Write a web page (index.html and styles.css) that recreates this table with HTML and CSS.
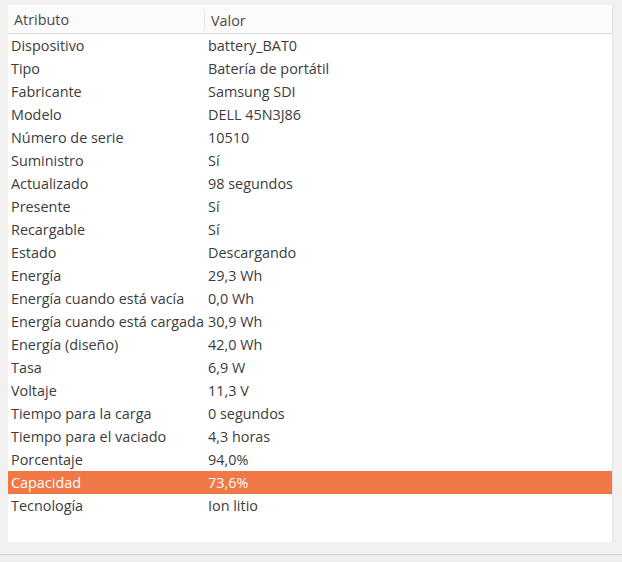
FILE: index.html
```html
<!DOCTYPE html>
<html lang="es">
<head>
<meta charset="utf-8">
<title>Batería</title>
<link rel="stylesheet" href="styles.css">
</head>
<body>
<div class="window">
  <div class="panel">
    <div class="head">
      <div class="hcell">Atributo</div>
      <div class="hcell hval">Valor</div>
    </div>
    <div class="rows">
      <div class="row"><span class="k">Dispositivo</span><span class="v">battery_BAT0</span></div>
      <div class="row"><span class="k">Tipo</span><span class="v">Batería de portátil</span></div>
      <div class="row"><span class="k">Fabricante</span><span class="v">Samsung SDI</span></div>
      <div class="row"><span class="k">Modelo</span><span class="v">DELL 45N3J86</span></div>
      <div class="row"><span class="k">Número de serie</span><span class="v">10510</span></div>
      <div class="row"><span class="k">Suministro</span><span class="v">Sí</span></div>
      <div class="row"><span class="k">Actualizado</span><span class="v">98 segundos</span></div>
      <div class="row"><span class="k">Presente</span><span class="v">Sí</span></div>
      <div class="row"><span class="k">Recargable</span><span class="v">Sí</span></div>
      <div class="row"><span class="k">Estado</span><span class="v">Descargando</span></div>
      <div class="row"><span class="k">Energía</span><span class="v">29,3 Wh</span></div>
      <div class="row"><span class="k">Energía cuando está vacía</span><span class="v">0,0 Wh</span></div>
      <div class="row"><span class="k">Energía cuando está cargada</span><span class="v">30,9 Wh</span></div>
      <div class="row"><span class="k">Energía (diseño)</span><span class="v">42,0 Wh</span></div>
      <div class="row"><span class="k">Tasa</span><span class="v">6,9 W</span></div>
      <div class="row"><span class="k">Voltaje</span><span class="v">11,3 V</span></div>
      <div class="row"><span class="k">Tiempo para la carga</span><span class="v">0 segundos</span></div>
      <div class="row"><span class="k">Tiempo para el vaciado</span><span class="v">4,3 horas</span></div>
      <div class="row"><span class="k">Porcentaje</span><span class="v">94,0%</span></div>
      <div class="row selected"><span class="k">Capacidad</span><span class="v">73,6%</span></div>
      <div class="row"><span class="k">Tecnología</span><span class="v">Ion litio</span></div>
    </div>
  </div>
  <div class="footer"></div>
</div>
</body>
</html>
```
FILE: styles.css
```css
html, body {
  margin: 0;
  padding: 0;
}
body {
  width: 622px;
  height: 562px;
  overflow: hidden;
  background: #f2f1f0;
  font-family: "Open Sans", "DejaVu Sans", sans-serif;
  font-size: 14.4px;
  color: #3c3c3c;
}
.window {
  padding: 5px 10px 0 8px;
}
.panel {
  height: 537px;
  background: #ffffff;
  box-shadow: 1px 0 0 #e4e3e2;
}
.head {
  display: grid;
  grid-template-columns: 196px 1fr;
  background: #fbfbfb;
  border-bottom: 1px solid #d9d9d9;
  box-sizing: border-box;
  height: 29px;
}
.hcell {
  display: flex;
  align-items: center;
  padding-left: 6px;
  color: #4a4a4a;
}
.hval {
  padding-left: 6px;
  border-left: 1px solid #e6e6e6;
  margin: 5px 0 3px;
}
.row {
  display: grid;
  grid-template-columns: 196px 1fr;
  height: 23px;
  align-items: center;
}
.k {
  padding-left: 3px;
  white-space: nowrap;
}
.v {
  padding-left: 4px;
  white-space: nowrap;
}
.selected {
  background: #f07746;
  color: #ffffff;
}
.footer {
  margin: 12px -10px 0 -8px;
  height: 8px;
  border-top: 1px solid #d0cfce;
  background: #efeeed;
}
```
